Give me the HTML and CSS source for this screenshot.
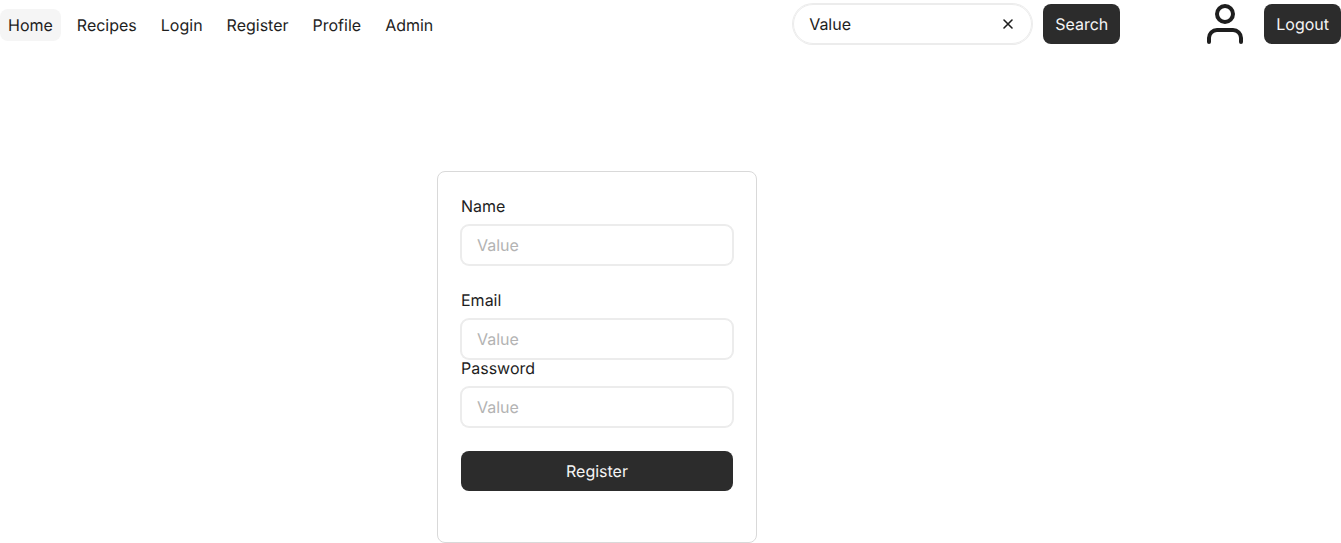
FILE: index.html
```html
<!DOCTYPE html>
<html lang="en">
<head>
<meta charset="utf-8">
<title>Register</title>
<link rel="stylesheet" href="styles.css">
</head>
<body>
<header class="header">
  <nav class="nav">
    <a class="pill active" href="#">Home</a>
    <a class="pill" href="#">Recipes</a>
    <a class="pill" href="#">Login</a>
    <a class="pill" href="#">Register</a>
    <a class="pill" href="#">Profile</a>
    <a class="pill" href="#">Admin</a>
  </nav>
  <form class="search">
    <div class="search-box">
      <input class="search-input" type="text" value="Value" aria-label="Search recipes">
      <button class="clear" type="button" aria-label="Clear">
        <svg width="16" height="16" viewBox="0 0 16 16" fill="none" stroke="#1e1e1e" stroke-width="1.6" stroke-linecap="round" stroke-linejoin="round"><path d="M12 4L4 12M4 4l8 8"/></svg>
      </button>
    </div>
    <button class="button" type="button">Search</button>
  </form>
  <div class="account">
    <svg class="user" width="48" height="48" viewBox="0 0 48 48" fill="none" stroke="#1e1e1e" stroke-width="4" stroke-linecap="round" stroke-linejoin="round" role="img" aria-label="User"><path d="M40 42v-4a8 8 0 0 0-8-8H16a8 8 0 0 0-8 8v4"/><circle cx="24" cy="14" r="8"/></svg>
    <button class="button" type="button">Logout</button>
  </div>
</header>
<main class="main">
  <form class="card">
    <div class="field name-field">
      <label for="name">Name</label>
      <input id="name" class="input" type="text" placeholder="Value">
    </div>
    <div class="field">
      <label for="email">Email</label>
      <input id="email" class="input" type="email" placeholder="Value">
    </div>
    <div class="field password-field">
      <label for="password">Password</label>
      <input id="password" class="input" type="password" placeholder="Value">
    </div>
    <button class="button" type="button">Register</button>
  </form>
</main>
</body>
</html>
```

FILE: styles.css
```css
* {
  box-sizing: border-box;
}

body {
  margin: 0;
  background: #fff;
  color: #1e1e1e;
  font: 16px/22px Inter, sans-serif;
  text-rendering: geometricPrecision;
}

input,
button {
  font: inherit;
  color: inherit;
  text-rendering: inherit;
}

.header {
  display: flex;
  align-items: center;
  height: 48px;
}

.nav {
  display: flex;
  gap: 8px;
  margin-right: auto;
  padding-top: 2px;
}

.pill {
  padding: 8px;
  border-radius: 8px;
  color: inherit;
  line-height: 16px;
  text-decoration: none;
}

.active {
  background: #f5f5f5;
}

.search {
  display: flex;
  align-items: center;
  gap: 11px;
}

.search-box,
.input {
  height: 40px;
  padding: 0 15px;
  border: 1px solid #ececec;
  box-shadow: 0 0 0 1px #ececec;
}

.search-box {
  display: flex;
  align-items: center;
  width: 239px;
  border-radius: 20px;
}

.search-input {
  flex: 1;
  min-width: 0;
  padding: 0;
  border: 0;
  outline: 0;
  background: none;
}

.clear {
  display: flex;
  padding: 0;
  border: 0;
  background: none;
}

.button {
  height: 40px;
  padding: 0 12px;
  border: 0;
  border-radius: 8px;
  background: #2c2c2c;
  color: #f5f5f5;
}

.account {
  display: flex;
  align-items: center;
  gap: 15px;
  margin-left: 81px;
}

.main {
  display: flex;
  justify-content: center;
  padding: 123px 147px 0 0;
}

.card {
  display: flex;
  flex-direction: column;
  width: 320px;
  padding: 25px 23px 51px;
  border: 1px solid #d9d9d9;
  border-radius: 8px;
}

.field {
  display: flex;
  flex-direction: column;
  gap: 10px;
  line-height: 18px;
}

.name-field {
  margin-bottom: 26px;
}

.password-field {
  margin-bottom: 24px;
}

.input {
  border-radius: 8px;
  outline: 0;
}

.input::placeholder {
  color: #b3b3b3;
}
```
